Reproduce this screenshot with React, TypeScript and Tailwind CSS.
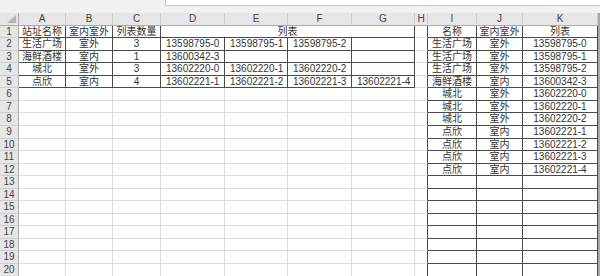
import React from 'react';

const LETTERS = ['', 'A', 'B', 'C', 'D', 'E', 'F', 'G', 'H', 'I', 'J', 'K', ''];

// rows 1..5, columns A..G (row 1 has D:G merged)
const LEFT: string[][] = [
  ['站址名称', '室内室外', '列表数量', '列表'],
  ['生活广场', '室外', '3', '13598795-0', '13598795-1', '13598795-2', ''],
  ['海鲜酒楼', '室内', '1', '13600342-3', '', '', ''],
  ['城北', '室外', '3', '13602220-0', '13602220-1', '13602220-2', ''],
  ['点欣', '室内', '4', '13602221-1', '13602221-2', '13602221-3', '13602221-4'],
];

// rows 1..12, columns I..K
const RIGHT: string[][] = [
  ['名称', '室内室外', '列表'],
  ['生活广场', '室外', '13598795-0'],
  ['生活广场', '室外', '13598795-1'],
  ['生活广场', '室外', '13598795-2'],
  ['海鲜酒楼', '室内', '13600342-3'],
  ['城北', '室外', '13602220-0'],
  ['城北', '室外', '13602220-1'],
  ['城北', '室外', '13602220-2'],
  ['点欣', '室内', '13602221-1'],
  ['点欣', '室内', '13602221-2'],
  ['点欣', '室内', '13602221-3'],
  ['点欣', '室内', '13602221-4'],
];

const ROWS = Array.from({ length: 20 }, (_, i) => i + 1);

function borders(r: number, c: number): string {
  const inT1 = r >= 1 && r <= 5 && c >= 1 && c <= 7;
  const inT2 = c >= 9 && c <= 11;
  const rDark = inT1 || inT2 || c === 8;
  const bDark = inT1 || inT2;
  return (
    'border-r border-b ' +
    (rDark ? 'border-r-[#4a4a4a] ' : 'border-r-[#dcdcdc] ') +
    (bDark ? 'border-b-[#4a4a4a]' : 'border-b-[#dcdcdc]')
  );
}

function textOf(r: number, c: number): string {
  if (r <= 5 && c >= 1 && c <= 7) return LEFT[r - 1][c - 1] ?? '';
  if (r <= 12 && c >= 9 && c <= 11) return RIGHT[r - 1][c - 9] ?? '';
  return '';
}

function Cell({ r, c }: { r: number; c: number }) {
  const left = c >= 4 && c <= 7;
  return (
    <div
      className={
        'flex items-center overflow-visible whitespace-nowrap ' +
        (left ? 'justify-start pl-[5px] ' : 'justify-center ') +
        borders(r, c)
      }
    >
      {textOf(r, c)}
    </div>
  );
}

export default function App() {
  return (
    <div
      className="h-[276px] w-[600px] overflow-hidden bg-white text-[10px] leading-none text-[#333]"
      style={{ fontFamily: '"Liberation Sans", "Noto Sans CJK SC", sans-serif' }}
    >
      {/* formula bar strip */}
      <div className="h-[13px] bg-[#f1f1f1]">
        <div className="ml-[165px] h-[6px] border-b border-l border-[#c8c8c8] bg-white" />
      </div>

      <div className="grid grid-cols-[19px_47px_47px_48px_64px_63px_64px_63px_13px_49px_46px_75px_2px] grid-rows-[13px_12px_13px_12px_13px_12px_13px_12px_13px_13px_12px_13px_12px_13px_12px_13px_12px_13px_12px_13px_13px]">
        {/* column headers */}
        <div className="relative border-b border-r border-[#ababab] bg-[#e6e6e6]">
          <svg className="absolute right-[2px] bottom-[2px]" width="9" height="8" viewBox="0 0 9 8">
            <polygon points="9,0 9,8 0,8" fill="#b5b5b5" />
          </svg>
        </div>
        {LETTERS.slice(1, 12).map((l, i) => (
          <div
            key={i}
            className="flex items-center justify-center border-b border-r border-b-[#ababab] border-r-[#cdcdcd] bg-[#e6e6e6] text-[#444]"
          >
            {l}
          </div>
        ))}
        <div className="bg-[#a8a8a8]" />

        {ROWS.map((r) => (
          <React.Fragment key={r}>
            <div className="flex items-center justify-center border-b border-r border-b-[#cdcdcd] border-r-[#ababab] bg-[#e6e6e6] text-[#444]">
              {r}
            </div>
            {r === 1 ? (
              <>
                <Cell r={1} c={1} />
                <Cell r={1} c={2} />
                <Cell r={1} c={3} />
                <div className="col-span-4 flex items-center justify-center border-b border-r border-[#4a4a4a]">
                  列表
                </div>
              </>
            ) : (
              [1, 2, 3, 4, 5, 6, 7].map((c) => <Cell key={c} r={r} c={c} />)
            )}
            {[8, 9, 10, 11].map((c) => (
              <Cell key={c} r={r} c={c} />
            ))}
            <div className="bg-[#a8a8a8]" />
          </React.Fragment>
        ))}
      </div>
    </div>
  );
}
